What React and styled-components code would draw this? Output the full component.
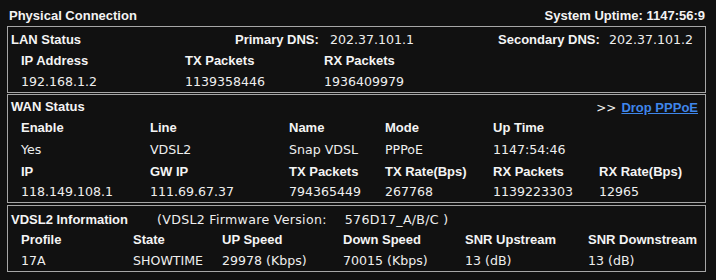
import React from "react";
import styled, { createGlobalStyle } from "styled-components";

const Global = createGlobalStyle`
  html, body { margin: 0; padding: 0; background: #111111; }
  body { font-family: "Liberation Sans", Arial, sans-serif; color: #f2f2f2; }
`;

const Page = styled.div`
  width: 716px;
  height: 280px;
  background: #111111;
  box-sizing: border-box;
  padding: 0 10px 0 7px;
`;

const TopBar = styled.div`
  display: flex;
  justify-content: space-between;
  align-items: center;
  height: 26px;
  padding: 5px 1px 0 2px;
  box-sizing: border-box;
`;

const Bold = styled.span`
  font-family: "Liberation Sans", Arial, sans-serif;
  font-weight: bold;
  font-size: 13px;
  color: #f4f4f4;
  white-space: nowrap;
`;

const Value = styled.span`
  font-family: "DejaVu Sans", Verdana, sans-serif;
  font-size: 12.6px;
  color: #eeeeee;
  white-space: nowrap;
`;

const Section = styled.div`
  border: 1px solid #a6a6a6;
  padding-top: ${(p) => p.$pad}px;
  margin-bottom: ${(p) => p.$gap}px;
`;

const Row = styled.div`
  display: grid;
  grid-template-columns: ${(p) => p.$cols};
  align-items: center;
  height: ${(p) => p.$h || 21}px;
  padding-left: ${(p) => (p.$title ? 3 : 13)}px;
`;

const TitleRow = styled.div`
  display: flex;
  align-items: center;
  height: ${(p) => p.$h || 21}px;
  padding: 0 7px 0 3px;
  justify-content: space-between;
`;

const Arrow = styled.span`
  font-family: "DejaVu Sans", Verdana, sans-serif;
  font-size: 12px;
  color: #f0f0f0;
  margin-right: 5px;
`;

const Link = styled.a`
  font-family: "Liberation Sans", Arial, sans-serif;
  font-weight: bold;
  font-size: 13px;
  color: #3f86ea;
  text-decoration: underline;
  cursor: pointer;
`;

const Firmware = styled.span`
  margin-left: ${(p) => p.$ml}px;
  letter-spacing: 0.3px;
`;

const LAN_COLS = "164px 139px 1fr";
const WAN_COLS = "129px 139px 96px 108px 106px 1fr";
const VDSL_COLS = "112px 89px 121px 122px 123px 1fr";

export default function App() {
  return (
    <Page>
      <Global />
      <TopBar>
        <Bold>Physical Connection</Bold>
        <Bold>System Uptime: 1147:56:9</Bold>
      </TopBar>

      <Section $pad={2} $gap={1}>
        <Row $title $cols="224px 95px 168px 111px 1fr">
          <Bold>LAN Status</Bold>
          <Bold>Primary DNS:</Bold>
          <Value>202.37.101.1</Value>
          <Bold>Secondary DNS:</Bold>
          <Value>202.37.101.2</Value>
        </Row>
        <Row $cols={LAN_COLS}>
          <Bold>IP Address</Bold>
          <Bold>TX Packets</Bold>
          <Bold>RX Packets</Bold>
        </Row>
        <Row $cols={LAN_COLS}>
          <Value>192.168.1.2</Value>
          <Value>1139358446</Value>
          <Value>1936409979</Value>
        </Row>
      </Section>

      <Section $pad={1} $gap={2}>
        <TitleRow>
          <Bold>WAN Status</Bold>
          <span>
            <Arrow>&gt;&gt;</Arrow>
            <Link>Drop PPPoE</Link>
          </span>
        </TitleRow>
        <Row $cols={WAN_COLS} $h={21.5}>
          <Bold>Enable</Bold>
          <Bold>Line</Bold>
          <Bold>Name</Bold>
          <Bold>Mode</Bold>
          <Bold>Up Time</Bold>
          <span />
        </Row>
        <Row $cols={WAN_COLS} $h={22.5}>
          <Value>Yes</Value>
          <Value>VDSL2</Value>
          <Value>Snap VDSL</Value>
          <Value>PPPoE</Value>
          <Value>1147:54:46</Value>
          <span />
        </Row>
        <Row $cols={WAN_COLS} $h={20.5}>
          <Bold>IP</Bold>
          <Bold>GW IP</Bold>
          <Bold>TX Packets</Bold>
          <Bold>TX Rate(Bps)</Bold>
          <Bold>RX Packets</Bold>
          <Bold>RX Rate(Bps)</Bold>
        </Row>
        <Row $cols={WAN_COLS} $h={20.5}>
          <Value>118.149.108.1</Value>
          <Value>111.69.67.37</Value>
          <Value>794365449</Value>
          <Value>267768</Value>
          <Value>1139223303</Value>
          <Value>12965</Value>
        </Row>
      </Section>

      <Section $pad={2} $gap={0}>
        <TitleRow>
          <span>
            <Bold>VDSL2 Information</Bold>
            <Firmware $ml={29}>
              <Value>(VDSL2 Firmware Version:</Value>
            </Firmware>
            <Firmware $ml={18}>
              <Value>576D17_A/B/C )</Value>
            </Firmware>
          </span>
        </TitleRow>
        <Row $cols={VDSL_COLS}>
          <Bold>Profile</Bold>
          <Bold>State</Bold>
          <Bold>UP Speed</Bold>
          <Bold>Down Speed</Bold>
          <Bold>SNR Upstream</Bold>
          <Bold>SNR Downstream</Bold>
        </Row>
        <Row $cols={VDSL_COLS}>
          <Value>17A</Value>
          <Value>SHOWTIME</Value>
          <Value>29978 (Kbps)</Value>
          <Value>70015 (Kbps)</Value>
          <Value>13 (dB)</Value>
          <Value>13 (dB)</Value>
        </Row>
      </Section>
    </Page>
  );
}
